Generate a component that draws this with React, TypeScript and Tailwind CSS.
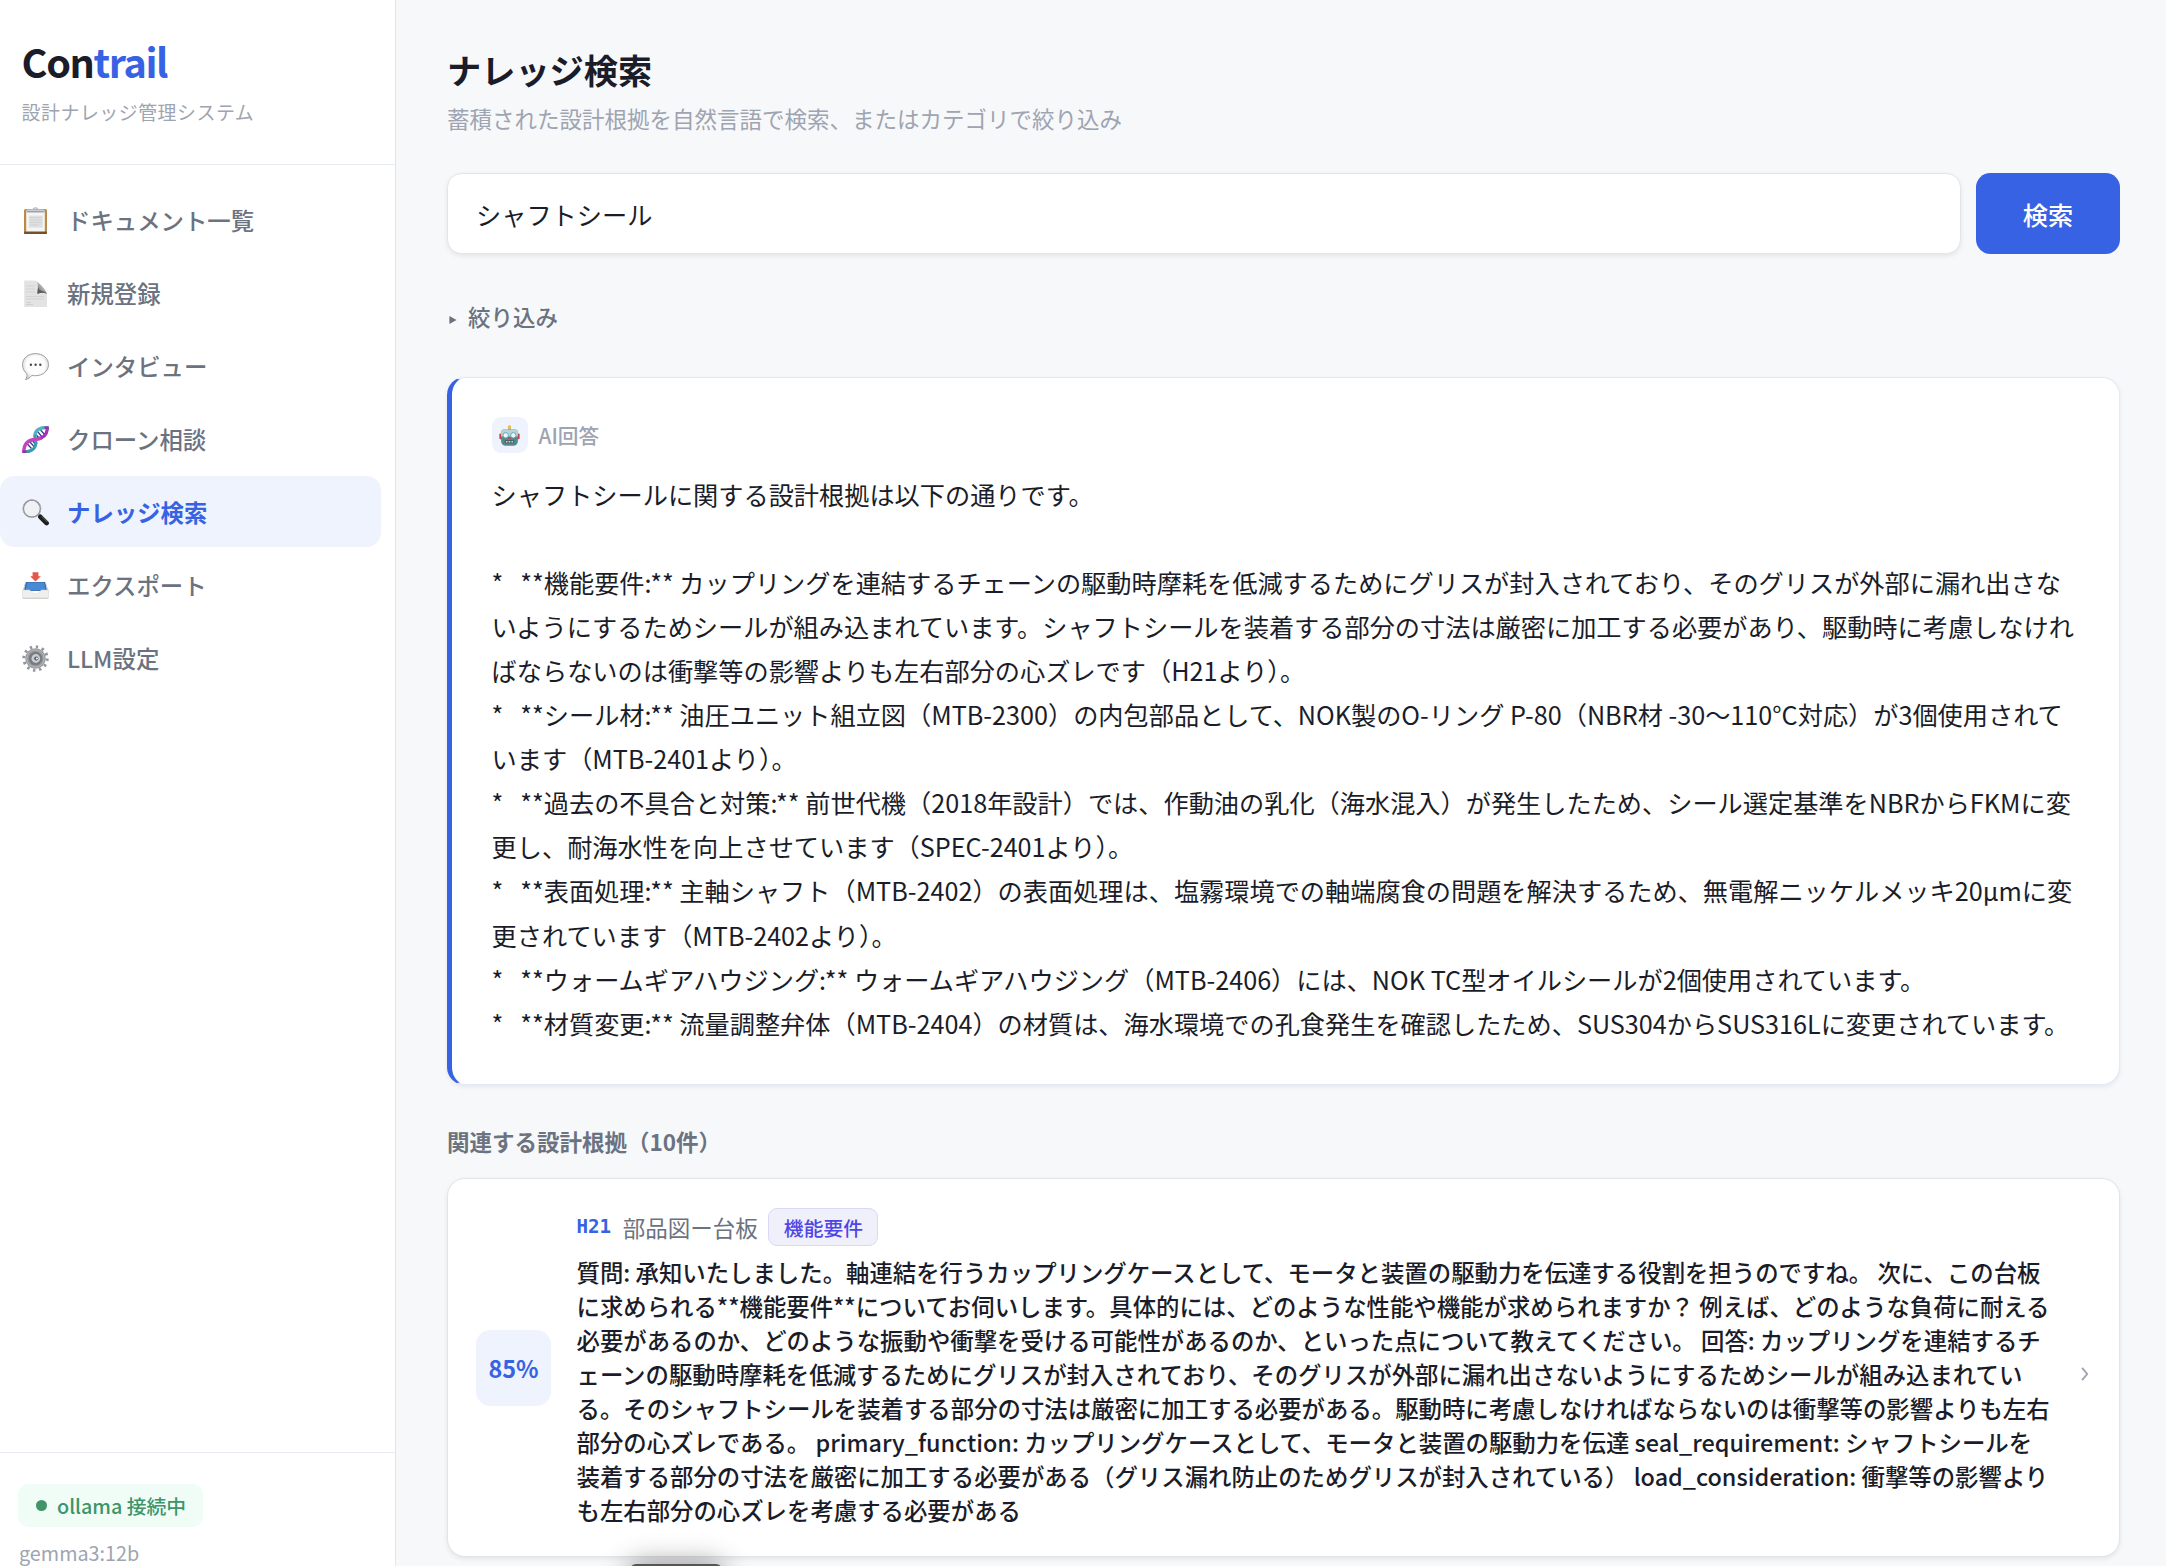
import React from 'react';

const ClipboardIcon = () => (
  <svg viewBox="0 0 27 27" className="w-[27px] h-[27px]">
    <rect x="2" y="2" width="23" height="25" rx="1.6" fill="#b98a4a" />
    <rect x="2" y="24.6" width="23" height="2.4" rx="1" fill="#76502a" />
    <rect x="4.2" y="3.6" width="18.6" height="20.8" fill="#f5f5f5" />
    <rect x="6.8" y="8.6" width="14" height="12" fill="#dfe0e1" />
    <path d="M8 10.5h11.5M8 13h11.5M8 15.5h11.5M8 18h9" stroke="#d0d1d3" strokeWidth="1" />
    <path d="M9.5 3C11.5 2.6 11.3.8 13.5.8S15.5 2.6 17.5 3" fill="none" stroke="#b4bbc2" strokeWidth="1.2" />
    <rect x="4.5" y="2.6" width="18" height="2.9" rx=".8" fill="#9fa3a8" />
    <rect x="4.5" y="2.6" width="18" height="1.3" rx=".6" fill="#c9cdd1" />
  </svg>
);

const PageIcon = () => (
  <svg viewBox="0 0 27 27" className="w-[27px] h-[27px]">
    <defs>
      <linearGradient id="pageCurl" x1="0" y1="1" x2="1" y2="0">
        <stop offset="0" stopColor="#4f4f4f" />
        <stop offset=".5" stopColor="#a8a8a8" />
        <stop offset="1" stopColor="#dedede" />
      </linearGradient>
    </defs>
    <path d="M2.2.5H13c3 1 3 5 3 8 4 0 7 1 9 5V27H2.2z" fill="#e3e3e3" />
    <path d="M4 6h9M4 9h9M4 12h9M4 16.5h18M4 19h18" stroke="#d3d3d3" strokeWidth="1" />
    <path d="M4 22.5h5M4 24.5h7" stroke="#c9c9c9" strokeWidth=".8" />
    <path d="M13 .5c3.5 1.5 3 5 2.6 13.5 2.4-1.5 6-1.500 9.400-.2C23.500 9 17.500 3 13 .5z" fill="url(#pageCurl)" />
    <path d="M15.6 14c-.4-3 .2-5 1-7 0 2.500 1 3.300 2.800 3.800 2 .5 4.300 1 5.600 3-3.400-1.300-7-1.300-9.400.2z" fill="#4c4c4c" opacity=".75" />
  </svg>
);

const SpeechIcon = () => (
  <svg viewBox="0 0 27 27" className="w-[27px] h-[27px]">
    <defs>
      <radialGradient id="bubble" cx=".5" cy=".45" r=".55">
        <stop offset=".65" stopColor="#fdfdfd" />
        <stop offset="1" stopColor="#d2d2d2" />
      </radialGradient>
    </defs>
    <path
      d="M13.500.6C20.500.6 26.500 5 26.500 11.600S20.500 22.700 13.500 22.700c-1.300 0-2.500-.1-3.600-.4-1.600 2.200-3.900 3.800-6.500 4.300 1.300-1.600 1.900-3.500 1.500-5.900C2.200 18.700.5 15.500.5 11.600.5 5 6.500.6 13.500.6z"
      fill="url(#bubble)"
      stroke="#a0a0a0"
      strokeWidth="1"
    />
    <circle cx="8.900" cy="11.800" r="1.200" fill="#4a4a4a" />
    <circle cx="13.600" cy="11.800" r="1.200" fill="#4a4a4a" />
    <circle cx="18.300" cy="11.800" r="1.200" fill="#4a4a4a" />
  </svg>
);

const DnaIcon = () => (
  <svg viewBox="0 0 27 27" className="w-[27px] h-[27px]" fill="none" strokeLinecap="butt">
    <path d="M15.500 5.500l5 6M18.500 4l4.500 5M13.500 8l3.500 4M4.500 17l5 5.500M7.500 15.500l5 5.500M10.500 14.500l3 4" stroke="#3c3f8f" strokeWidth="1.300" />
    <path d="M25.500 1.800C25 8.500 21.500 12.500 14.500 12.800" stroke="#a531b4" strokeWidth="3.200" />
    <path d="M2 25.800C7 26.200 13.500 24 13.800 17.200" stroke="#3a9cae" strokeWidth="3.200" />
    <path d="M26.500 1.600C18 .8 12.800 4.200 12.800 10.500" stroke="#52b2c2" strokeWidth="3.400" />
    <path d="M12.800 9.500c0 3 1.200 4.500 1.200 8.500" stroke="#3a9cae" strokeWidth="3" />
    <path d="M1.800 26.500C1.500 19 5 14 12.500 13.500c2.500-.2 4.500-.2 6.500-1.500" stroke="#c444bf" strokeWidth="3.300" />
    <path d="M22.500 1.800h4.300M.5 25.800h4" stroke="#9a2cae" strokeWidth="2.400" />
  </svg>
);

const SearchIcon = () => (
  <svg viewBox="0 0 27 27" className="w-[27px] h-[27px]">
    <path d="M16.500 15.500l3 3" stroke="#8b8b8b" strokeWidth="2" />
    <path d="M18.300 17.800l6.300 6.300" stroke="#202020" strokeWidth="4.600" strokeLinecap="round" />
    <path d="M20 17.700l5 5" stroke="#6b6b6b" strokeWidth=".9" strokeLinecap="round" />
    <circle cx="9.900" cy="9.700" r="8.600" fill="#f0f1f5" stroke="#7c7f83" strokeWidth="1.500" />
    <circle cx="9.900" cy="9.700" r="8.900" fill="none" stroke="#c5cacf" strokeWidth=".6" />
  </svg>
);

const InboxIcon = () => (
  <svg viewBox="0 0 27 27" className="w-[27px] h-[27px]">
    <path d="M3.800 10h19.400l2.800 9H1z" fill="#356ba8" />
    <path d="M5 10.500h17l1.500 8H3.500z" fill="#4a8ad4" />
    <path d="M3.800 10h-.6L.8 18.500h1.400zM23.200 10h.6l2.400 8.500h-1.400z" fill="#c9d0d8" />
    <path d="M.4 18h7c1.500 0 2 4 6.100 4s4.600-4 6.100-4h7v7.500a1.200 1.200 0 0 1-1.200 1.200H1.600A1.200 1.200 0 0 1 .4 25.500z" fill="#f0efed" stroke="#cfcfcf" strokeWidth=".5" />
    <path d="M1 26.200h25" stroke="#c7c6c3" strokeWidth=".9" />
    <path d="M10.600.2h5.800v4h2.500L13.500 9.500 8.200 4.200h2.400z" fill="#e4564b" />
  </svg>
);

const GearIcon = () => (
  <svg viewBox="0 0 27 27" className="w-[27px] h-[27px]">
    <circle cx="13.500" cy="13.500" r="11.700" fill="none" stroke="#93979b" strokeWidth="3" strokeDasharray="2.400 3.726" />
    <circle cx="13.500" cy="13.500" r="10.200" fill="#94989c" />
    <circle cx="13.500" cy="13.500" r="8.600" fill="none" stroke="#b9bcc0" strokeWidth="1" />
    <circle cx="13.500" cy="13.500" r="6.600" fill="#777b80" />
    <circle cx="13.800" cy="13.500" r="4.400" fill="#c9ccd0" />
    <circle cx="14.300" cy="13.500" r="2.100" fill="#55595e" />
    <circle cx="14.900" cy="13.500" r="1.100" fill="#f2f3f4" />
  </svg>
);

const RobotIcon = () => (
  <svg viewBox="0 0 22 22" className="w-[21px] h-[21px]">
    <path d="M9.500 3.500h3v2.500h-3z" fill="#7f8fa6" />
    <circle cx="11" cy="2.200" r="1.900" fill="#f0bd44" />
    <rect x=".4" y="9" width="3.200" height="6" rx="1" fill="#b9483f" />
    <rect x="18.400" y="9" width="3.200" height="6" rx="1" fill="#b9483f" />
    <path d="M5 4.800h12c2 0 2.800 1.400 2.800 3.200v8.500c0 3.400-2 5.200-5 5.200H7.200c-3 0-5-1.800-5-5.200V8c0-1.800.8-3.200 2.800-3.200z" fill="#548990" />
    <path d="M5 4.800h12c2 0 2.800 1.400 2.800 3.200v4H2.200V8c0-1.800.8-3.200 2.800-3.200z" fill="#b9d3d3" />
    <circle cx="7" cy="10.800" r="2.800" fill="#e9fbff" stroke="#46a3bb" strokeWidth=".9" />
    <circle cx="15" cy="10.800" r="2.800" fill="#e9fbff" stroke="#46a3bb" strokeWidth=".9" />
    <path d="M11 11.800l1.400 2.800H9.600z" fill="#d2453a" />
    <rect x="6" y="16" width="10" height="3" rx=".8" fill="#46595d" />
    <path d="M7.200 17.500h1.800M10.100 17.500h1.800M13 17.500h1.800" stroke="#e6cbb8" strokeWidth="1.500" />
  </svg>
);

const navItems = [
  { label: 'ドキュメント一覧', Icon: ClipboardIcon },
  { label: '新規登録', Icon: PageIcon },
  { label: 'インタビュー', Icon: SpeechIcon },
  { label: 'クローン相談', Icon: DnaIcon },
  { label: 'ナレッジ検索', Icon: SearchIcon, active: true },
  { label: 'エクスポート', Icon: InboxIcon },
  { label: 'LLM設定', Icon: GearIcon },
];

const answer = `シャフトシールに関する設計根拠は以下の通りです。

*   **機能要件:** カップリングを連結するチェーンの駆動時摩耗を低減するためにグリスが封入されており、そのグリスが外部に漏れ出さな
いようにするためシールが組み込まれています。シャフトシールを装着する部分の寸法は厳密に加工する必要があり、駆動時に考慮しなけれ
ばならないのは衝撃等の影響よりも左右部分の心ズレです（H21より）。
*   **シール材:** 油圧ユニット組立図（MTB-2300）の内包部品として、NOK製のO-リング P-80（NBR材 -30〜110°C対応）が3個使用されて
います（MTB-2401より）。
*   **過去の不具合と対策:** 前世代機（2018年設計）では、作動油の乳化（海水混入）が発生したため、シール選定基準をNBRからFKMに変
更し、耐海水性を向上させています（SPEC-2401より）。
*   **表面処理:** 主軸シャフト（MTB-2402）の表面処理は、塩霧環境での軸端腐食の問題を解決するため、無電解ニッケルメッキ20μmに変
更されています（MTB-2402より）。
*   **ウォームギアハウジング:** ウォームギアハウジング（MTB-2406）には、NOK TC型オイルシールが2個使用されています。
*   **材質変更:** 流量調整弁体（MTB-2404）の材質は、海水環境での孔食発生を確認したため、SUS304からSUS316Lに変更されています。`;

const excerpt = `質問: 承知いたしました。軸連結を行うカップリングケースとして、モータと装置の駆動力を伝達する役割を担うのですね。 次に、この台板
に求められる**機能要件**についてお伺いします。具体的には、どのような性能や機能が求められますか？ 例えば、どのような負荷に耐える
必要があるのか、どのような振動や衝撃を受ける可能性があるのか、といった点について教えてください。 回答: カップリングを連結するチ
ェーンの駆動時摩耗を低減するためにグリスが封入されており、そのグリスが外部に漏れ出さないようにするためシールが組み込まれてい
る。そのシャフトシールを装着する部分の寸法は厳密に加工する必要がある。駆動時に考慮しなければならないのは衝撃等の影響よりも左右
部分の心ズレである。 primary_function: カップリングケースとして、モータと装置の駆動力を伝達 seal_requirement: シャフトシールを
装着する部分の寸法を厳密に加工する必要がある（グリス漏れ防止のためグリスが封入されている） load_consideration: 衝撃等の影響より
も左右部分の心ズレを考慮する必要がある`;

function Sidebar() {
  return (
    <aside className="flex w-[396px] shrink-0 flex-col border-r border-[#e2e5ec] bg-white">
      <div className="h-[165px] border-b border-[#e9ebf3] pl-[21.6px] pt-[33px]">
        <div className="text-[39.6px] font-bold leading-[56px] tracking-[-1.4px] text-[#1a1d29]">
          Con<span className="text-[#3862e4]">trail</span>
        </div>
        <div className="mt-[7px] text-[18.9px] leading-[32px] tracking-[0.54px] text-[#9ea4b1]">
          設計ナレッジ管理システム
        </div>
      </div>
      <nav className="flex flex-1 flex-col gap-[2.5px] pr-[14px] pt-[18.8px]">
        {navItems.map(({ label, Icon, active }) => (
          <div
            key={label}
            className={
              active
                ? 'flex h-[70.6px] items-center gap-[18px] rounded-[14.4px] bg-[#eff3fe] pl-[22px] pt-[2px] text-[23.4px] font-semibold text-[#3862e4]'
                : 'flex h-[70.6px] items-center gap-[18px] rounded-[14.4px] pl-[22px] pt-[2px] text-[23.4px] font-medium text-[#6b7280]'
            }
          >
            <Icon />
            <span>{label}</span>
          </div>
        ))}
      </nav>
      <div className="h-[114px] border-t border-[#e9ebf0] pl-[18px] pt-[31px]">
        <div className="flex h-[43px] w-[185px] items-center gap-[10px] rounded-[10.8px] bg-[#effdf6] pl-[18px] text-[19.8px] font-medium text-[#3f9469]">
          <span className="h-[11px] w-[11px] rounded-full bg-[#3f9469]" />
          ollama 接続中
        </div>
        <div className="mt-[12px] pl-px text-[19.8px] leading-[28px] text-[#9ea4b1]">gemma3:12b</div>
      </div>
    </aside>
  );
}

export default function App() {
  return (
    <div
      lang="ja"
      className="relative flex h-[1566px] w-[2166px] overflow-hidden bg-[#f7f8fa] font-['Noto_Sans_CJK_JP',sans-serif] text-[#1a1d29]"
    >
      <Sidebar />
      <main className="flex min-w-0 flex-1 flex-col pl-[51px] pr-[46px] pt-[43px]">
        <h1 className="text-[34.2px] font-bold leading-[52px]">ナレッジ検索</h1>
        <p className="mt-[6px] text-[22.5px] leading-[34px] text-[#9ea4b1]">
          蓄積された設計根拠を自然言語で検索、またはカテゴリで絞り込み
        </p>

        <div className="mt-[38px] flex h-[81px] gap-[15px]">
          <div className="flex flex-1 items-center rounded-[14.4px] border border-[#e2e4ea] bg-white pl-[28px] pt-[2px] text-[25.2px] shadow-[0_2px_5px_rgba(0,0,0,0.08)]">
            シャフトシール
          </div>
          <button className="w-[144px] rounded-[14.4px] bg-[#3862e4] pt-[2px] text-[25.2px] font-medium text-white">
            検索
          </button>
        </div>

        <div className="mt-[46px] flex h-[34px] items-center text-[22.5px] font-medium text-[#6b7280]">
          <svg viewBox="0 0 9 10" className="ml-[2px] mr-[11px] mt-[5px] h-[8px] w-[8px]">
            <path d="M0 0l9 5-9 5z" fill="#6b7280" />
          </svg>
          絞り込み
        </div>

        <section className="mt-[43px] h-[708px] shrink-0 rounded-[18px] border border-l-[5px] border-[#e3e8fa] border-l-[#3862e4] bg-white pl-[39.6px] pt-[39px] shadow-[0_2px_5px_rgba(0,0,0,0.07)]">
          <div className="flex h-[36px] items-center gap-[11px]">
            <div className="flex h-[36px] w-[36px] items-center justify-center rounded-[9px] bg-[#eff3fe]">
              <RobotIcon />
            </div>
            <span className="pt-[2px] text-[20.7px] font-medium text-[#9ea4b1]">AI回答</span>
          </div>
          <div className="mt-[18.6px] whitespace-pre text-[25.2px] leading-[44.1px]">{answer}</div>
        </section>

        <h2 className="mt-[39px] text-[22.5px] font-semibold leading-[34px] text-[#6b7280]">
          関連する設計根拠（10件）
        </h2>

        <article className="mt-[20px] flex h-[379px] shrink-0 items-center rounded-[18px] border border-[#e2e4ea] bg-white pl-[28px] shadow-[0_2px_5px_rgba(0,0,0,0.08)]">
          <div className="mt-[1px] flex h-[76px] w-[75px] items-center justify-center rounded-[14.4px] bg-[#eff3fe] pt-[2px] text-[23.4px] font-bold text-[#3862e4]">
            85%
          </div>
          <div className="ml-[25.5px] w-[1478px]">
            <div className="flex h-[38px] items-center">
              <span className="font-['DejaVu_Sans_Mono',monospace] text-[19.2px] font-bold text-[#3862e4]">H21</span>
              <span className="ml-[11.5px] pt-[2px] text-[22.5px] text-[#6b7280]">部品図ー台板</span>
              <span className="ml-[10.8px] flex h-[38px] items-center rounded-[9px] border border-[#dad8f6] bg-[#f0f0fb] px-[14.4px] pt-[2px] text-[19.8px] font-medium text-[#4f46e5]">
                機能要件
              </span>
            </div>
            <div className="mt-[9px] whitespace-pre text-[23.4px] font-medium leading-[34px]">{excerpt}</div>
          </div>
          <svg viewBox="0 0 7 13" className="ml-[26px] mt-[12px] h-[14px] w-[7.5px]" fill="none">
            <path d="M1 .8l4.800 5.700L1 12.200" stroke="#9ea4b1" strokeWidth="1.800" />
          </svg>
        </article>
      </main>

      <div className="absolute left-[630px] top-[1564px] h-[40px] w-[92px] rounded-[6px] bg-[#555555] shadow-[0_0_28px_rgba(0,0,0,0.45)]" />
    </div>
  );
}
